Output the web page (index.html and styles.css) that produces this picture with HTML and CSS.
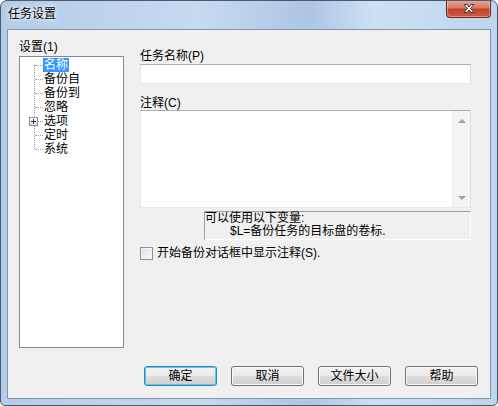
FILE: index.html
```html
<html>
<head>
<title>任务设置</title>
<meta charset="utf-8" />
<link rel="stylesheet" href="styles.css">
</head>
<body>

<div class="window">
<div class="titlebar">
<span class="title">任务设置</span>
<span class="close"><svg width="14" height="11" viewBox="0 0 14 11"><path d="M2 1.5h3l2 2.5 2-2.5h3l-3.5 4 3.5 4h-3l-2-2.5-2 2.5h-3l3.5-4z" fill="#fff" stroke="#3b3b3b" stroke-width="1" stroke-linejoin="round"/></svg></span>
</div>

<div class="client">
<div class="main">

<div class="left">
<div class="label">设置(1)</div>
<div class="tree">
<ul class="nodes">
<li><span class="sel">名称</span></li>
<li>备份自</li>
<li>备份到</li>
<li>忽略</li>
<li><span class="expander"></span>选项</li>
<li>定时</li>
<li>系统</li>
</ul>
</div>
</div>

<div class="right">
<div class="label">任务名称(P)</div>
<div class="edit name"></div>
<div class="label gap">注释(C)</div>
<div class="edit memo">
<div class="vscroll">
<span class="arrow up"></span>
<span class="arrow down"></span>
</div>
</div>
<div class="hint">
<div>可以使用以下变量:</div>
<div class="indent">$L=备份任务的目标盘的卷标.</div>
</div>
<div class="check">
<span class="box"></span>
<span>开始备份对话框中显示注释(S).</span>
</div>
</div>

</div>

<div class="buttons">
<span class="button focus">确定</span>
<span class="button">取消</span>
<span class="button">文件大小</span>
<span class="button">帮助</span>
</div>
</div>
</div>

</body>
</html>
```

FILE: styles.css
```css
body {
    margin: 0;
    font-family: "Liberation Sans", "Noto Sans CJK SC", sans-serif;
    font-size: 12px;
    color: #000;
}

.window {
    width: 498px;
    height: 406px;
    box-sizing: border-box;
    border: 1px solid #4a5b6d;
    border-radius: 7px 7px 5px 5px;
    background: linear-gradient(to right, #b5cce7, #c6daf0 40%, #adc6e4 62%, #cde0f4 75%, #bfd5ee);
    display: flex;
    flex-direction: column;
    overflow: hidden;
}

.titlebar {
    height: 28px;
    display: flex;
    align-items: flex-start;
    padding: 0 6px 0 7px;
}

.title {
    margin-top: 5px;
    line-height: 16px;
    text-shadow: 0 0 6px #fff, 0 0 3px #fff;
}

.close {
    margin-left: auto;
    width: 45px;
    height: 18px;
    margin-top: -1px;
    box-sizing: border-box;
    border: 1px solid #6d2b1f;
    border-top: none;
    border-radius: 0 0 4px 4px;
    background: linear-gradient(to bottom, #e9a99a, #d77a66 45%, #c2412a 55%, #d0593f);
    display: flex;
    align-items: center;
    justify-content: center;
    box-shadow: inset 0 0 0 1px rgba(255, 255, 255, 0.35);
}

.client {
    flex: 1;
    margin: 0 6px 6px 6px;
    border: 1px solid #8295ab;
    background-color: #f0f0f0;
    display: flex;
    flex-direction: column;
    padding: 10px 0 12px 11px;
}

.main {
    flex: 1;
    display: flex;
    gap: 16px;
    padding-right: 19px;
}

.left {
    width: 105px;
}

.label {
    line-height: 14px;
    height: 14px;
}

.label.gap {
    margin-top: 12px;
}

.tree {
    margin-top: 2px;
    height: 292px;
    box-sizing: border-box;
    border: 1px solid #828790;
    background-color: #fff;
    padding-top: 1px;
}

.nodes {
    list-style: none;
    margin: 0 0 0 14px;
    padding: 0;
    position: relative;
}

.nodes::before {
    content: "";
    position: absolute;
    left: 0;
    top: 7px;
    bottom: 7px;
    border-left: 1px dotted #a0a0a0;
}

.nodes li {
    position: relative;
    height: 14px;
    line-height: 14px;
    padding-left: 10px;
}

.nodes li::before {
    content: "";
    position: absolute;
    left: 1px;
    top: 7px;
    width: 8px;
    border-top: 1px dotted #a0a0a0;
}

.sel {
    margin-left: -1px;
    padding: 0 1px;
    background-color: #3399ff;
    color: #fff;
    display: inline-block;
    height: 14px;
}

.expander {
    position: absolute;
    left: -5px;
    top: 3px;
    width: 9px;
    height: 9px;
    box-sizing: border-box;
    border: 1px solid #919191;
    background: linear-gradient(to bottom, #fff, #dedede);
    z-index: 1;
}

.expander::before, .expander::after {
    content: "";
    position: absolute;
    background-color: #1f3a60;
}

.expander::before {
    left: 1px;
    top: 3px;
    width: 5px;
    height: 1px;
}

.expander::after {
    left: 3px;
    top: 1px;
    width: 1px;
    height: 5px;
}

.right {
    flex: 1;
    padding-top: 9px;
}

.edit {
    box-sizing: border-box;
    border: 1px solid;
    border-color: #abadb3 #dbdfe6 #e3e9ef #e2e3ea;
    background-color: #fff;
}

.name {
    margin-top: 1px;
    height: 20px;
}

.memo {
    height: 98px;
    display: flex;
    justify-content: flex-end;
}

.vscroll {
    width: 17px;
    background-color: #f4f4f4;
    border-left: 1px solid #eaeaea;
    display: flex;
    flex-direction: column;
    justify-content: space-between;
    align-items: center;
    padding: 8px 0 7px;
}

.arrow {
    width: 0;
    height: 0;
    border-left: 4px solid transparent;
    border-right: 4px solid transparent;
}

.arrow.up {
    border-bottom: 4px solid #a3a3a3;
}

.arrow.down {
    border-top: 4px solid #a3a3a3;
}

.hint {
    margin: 3px 0 0 64px;
    height: 29px;
    box-sizing: border-box;
    border: 1px solid;
    border-color: #a0a0a0 #fff #fff #a0a0a0;
    line-height: 13px;
}

.indent {
    padding-left: 25px;
}

.check {
    margin-top: 6px;
    display: flex;
    align-items: center;
    gap: 4px;
    line-height: 14px;
}

.box {
    width: 13px;
    height: 13px;
    box-sizing: border-box;
    border: 1px solid #8e8f8f;
    background: linear-gradient(135deg, #dcdcdc, #fbfbfb);
    box-shadow: inset 0 0 0 1px #f4f4f4;
}

.buttons {
    display: flex;
    justify-content: flex-end;
    gap: 14px;
    padding-right: 12px;
}

.button {
    width: 73px;
    height: 20px;
    box-sizing: border-box;
    border: 1px solid #707070;
    border-radius: 3px;
    background: linear-gradient(to bottom, #f2f2f2, #ebebeb 50%, #dddddd 51%, #cfcfcf);
    box-shadow: inset 0 0 0 1px #fcfcfc;
    text-align: center;
    line-height: 18px;
}

.button.focus {
    border-color: #3c7fb1;
    box-shadow: inset 0 0 0 1px #48d2f5;
}
```
